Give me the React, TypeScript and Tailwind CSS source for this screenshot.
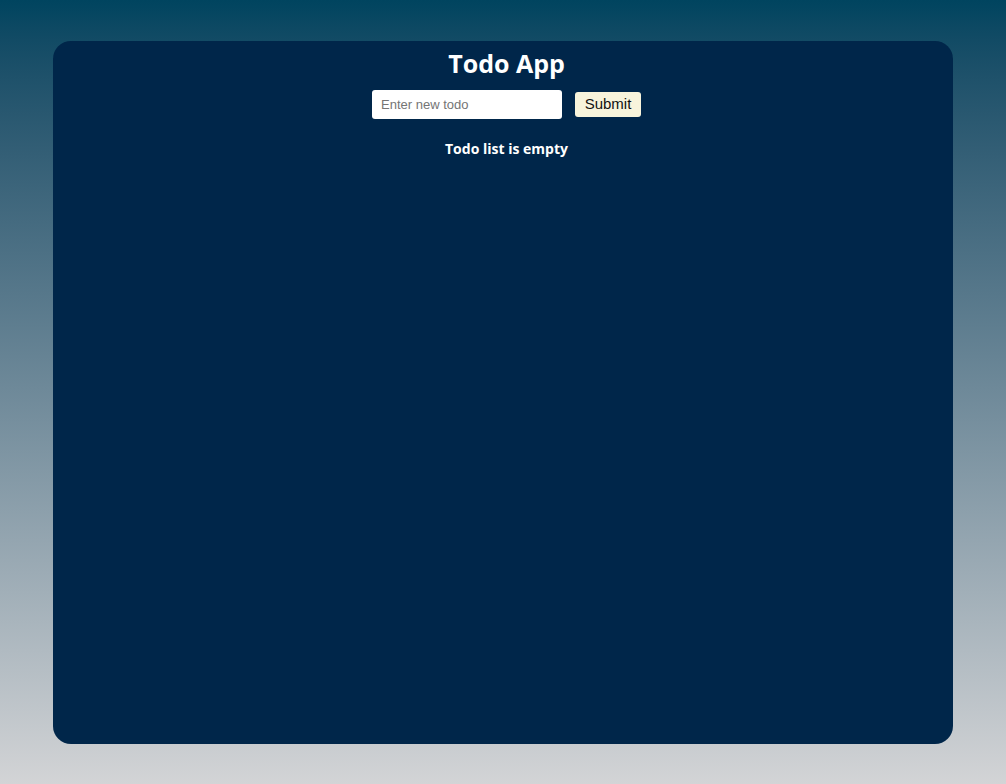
export default function App() {
  return (
    <div className="min-h-screen w-full bg-gradient-to-b from-[#00445f] to-[#d3d4d6] pt-[41px] pb-[40px] px-[53px]">
      <div className="h-[703px] rounded-[18px] bg-[#00264a] flex flex-col items-center pl-[7px]">
        <h1 className="mt-[6px] text-[25px] leading-[32px] font-bold text-white [font-family:'Open_Sans',sans-serif]">
          Todo App
        </h1>
        <form className="mt-[11px] flex items-center gap-[13px]" onSubmit={(e) => e.preventDefault()}>
          <input
            type="text"
            placeholder="Enter new todo"
            className="h-[29px] w-[190px] rounded-[3px] bg-white px-[9px] text-[13px] text-gray-800 placeholder:text-[#757575] outline-none [font-family:'Liberation_Sans',Arial,sans-serif]"
          />
          <button
            type="submit"
            className="h-[25px] w-[66px] rounded-[3px] bg-[#f8f4dc] text-[15px] text-[#111] [font-family:'Liberation_Sans',Arial,sans-serif]"
          >
            Submit
          </button>
        </form>
        <p className="mt-[19px] text-[14px] font-bold text-white [font-family:'Open_Sans',sans-serif]">
          Todo list is empty
        </p>
      </div>
    </div>
  );
}
